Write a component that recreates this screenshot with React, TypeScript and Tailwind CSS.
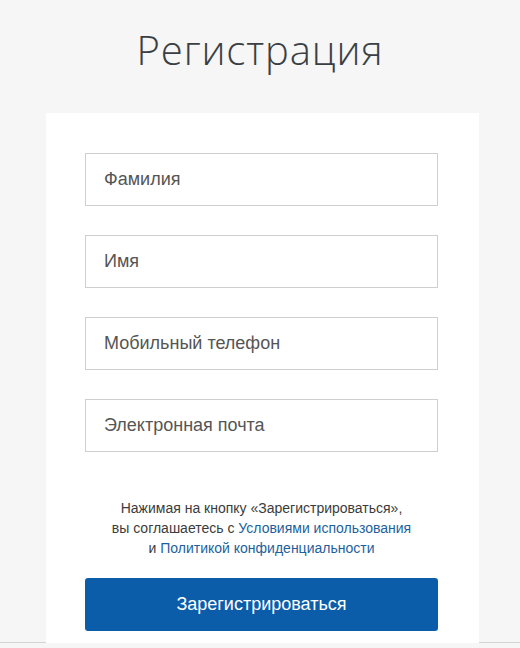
import React from 'react';

const fields = ['Фамилия', 'Имя', 'Мобильный телефон', 'Электронная почта'];

export default function App(): React.ReactElement {
  return (
    <div className="h-[648px] overflow-hidden bg-[#f5f6f5] font-['Liberation_Sans',Arial,sans-serif]">
      <div className="h-[643px] border-b border-[#d4d4d4]">
        <h1 className="pt-[22px] text-center font-['Open_Sans',sans-serif] text-[40px] font-light leading-[56px] tracking-[0.9px] text-[#3a3f44]">
          Регистрация
        </h1>

        <div className="ml-[46px] mt-[35px] h-[530px] w-[433px] bg-white pl-[39px] pr-[41px] pt-[40px]">
          <div className="flex flex-col gap-[29px]">
            {fields.map((f) => (
              <input
                key={f}
                placeholder={f}
                className="h-[53px] w-full border border-[#cfcfcf] px-[18px] text-[18px] text-[#555] outline-none placeholder:text-[#555]"
              />
            ))}
          </div>

          <p className="mt-[46px] text-center text-[14px] leading-[20px] text-[#3b3b3b]">
            Нажимая на кнопку «Зарегистрироваться»,
            <br />
            вы соглашаетесь с <a className="text-[#1d5f9c]">Условиями использования</a>
            <br />
            и <a className="text-[#1d5f9c]">Политикой конфиденциальности</a>
          </p>

          <button className="mt-[20px] h-[53px] w-full rounded-[3px] bg-[#0b5ca9] text-[18px] text-white">
            Зарегистрироваться
          </button>
        </div>
      </div>
    </div>
  );
}
